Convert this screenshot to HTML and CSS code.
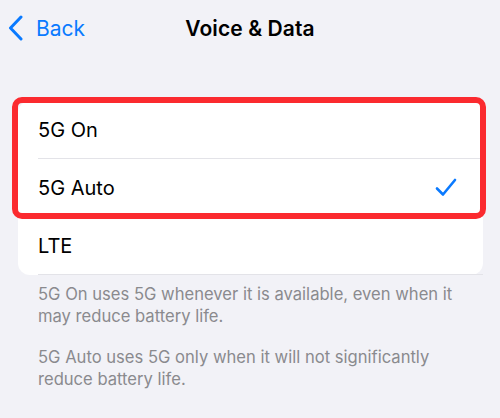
FILE: index.html
```html
<!DOCTYPE html>
<html>
<head>
<meta charset="utf-8">
<link rel="stylesheet" href="styles.css">
</head>
<body>
<div class="nav">
  <div class="back">
    <svg class="chev" width="16" height="26" viewBox="0 0 16 26"><path d="M13 2 L2.5 13 L13 24" fill="none" stroke="#0a7aff" stroke-width="3" stroke-linecap="round" stroke-linejoin="round"/></svg>
    <span>Back</span>
  </div>
  <div class="title">Voice &amp; Data</div>
</div>
<div class="group">
  <div class="card">
    <div class="row"><span>5G On</span></div>
    <div class="row"><span>5G Auto</span>
      <svg class="check" width="22" height="19" viewBox="0 0 22 19"><path d="M2 10.5 L8 16.5 L20 2" fill="none" stroke="#0a7aff" stroke-width="2.6" stroke-linecap="round" stroke-linejoin="round"/></svg>
    </div>
    <div class="row"><span>LTE</span></div>
    <div class="highlight"></div>
  </div>
  <div class="footer">
    <p>5G On uses 5G whenever it is available, even when it may reduce battery life.</p>
    <p>5G Auto uses 5G only when it will not significantly reduce battery life.</p>
  </div>
</div>
</body>
</html>
```
FILE: styles.css
```css
html, body {
  margin: 0;
  padding: 0;
  background: #f2f2f7;
  font-family: Inter, "Noto Sans", sans-serif;
  width: 500px;
  height: 418px;
  overflow: hidden;
}
.nav {
  position: relative;
  height: 56px;
  display: flex;
  align-items: center;
  justify-content: center;
}
.back {
  position: absolute;
  left: 8px;
  top: 15px;
  display: flex;
  align-items: center;
  gap: 12px;
  color: #0a7aff;
  font-size: 21px;
}
.chev { display: block; }
.title {
  font-size: 21px;
  font-weight: 600;
  color: #000;
  letter-spacing: 0.1px;
}
.group {
  padding: 45px 17px 0 18px;
}
.card {
  position: relative;
  background: #fff;
  border-radius: 12px;
}
.row {
  height: 57px;
  margin-left: 20px;
  padding-right: 26px;
  display: flex;
  align-items: center;
  justify-content: space-between;
  font-size: 20px;
  color: #000;
  border-bottom: 1px solid #e3e3e8;
}
.row:last-of-type { border-bottom: none; }
.check { display: block; }
.highlight {
  position: absolute;
  left: -6px;
  top: -4px;
  width: 462px;
  height: 110px;
  border: 6px solid #fb2a2f;
  border-radius: 10px;
}
.footer {
  padding: 9px 20px 0 20px;
  color: #8a8a8e;
  font-size: 16.6px;
  line-height: 21.5px;
}
.footer p {
  margin: 0 0 20px 0;
}
```
